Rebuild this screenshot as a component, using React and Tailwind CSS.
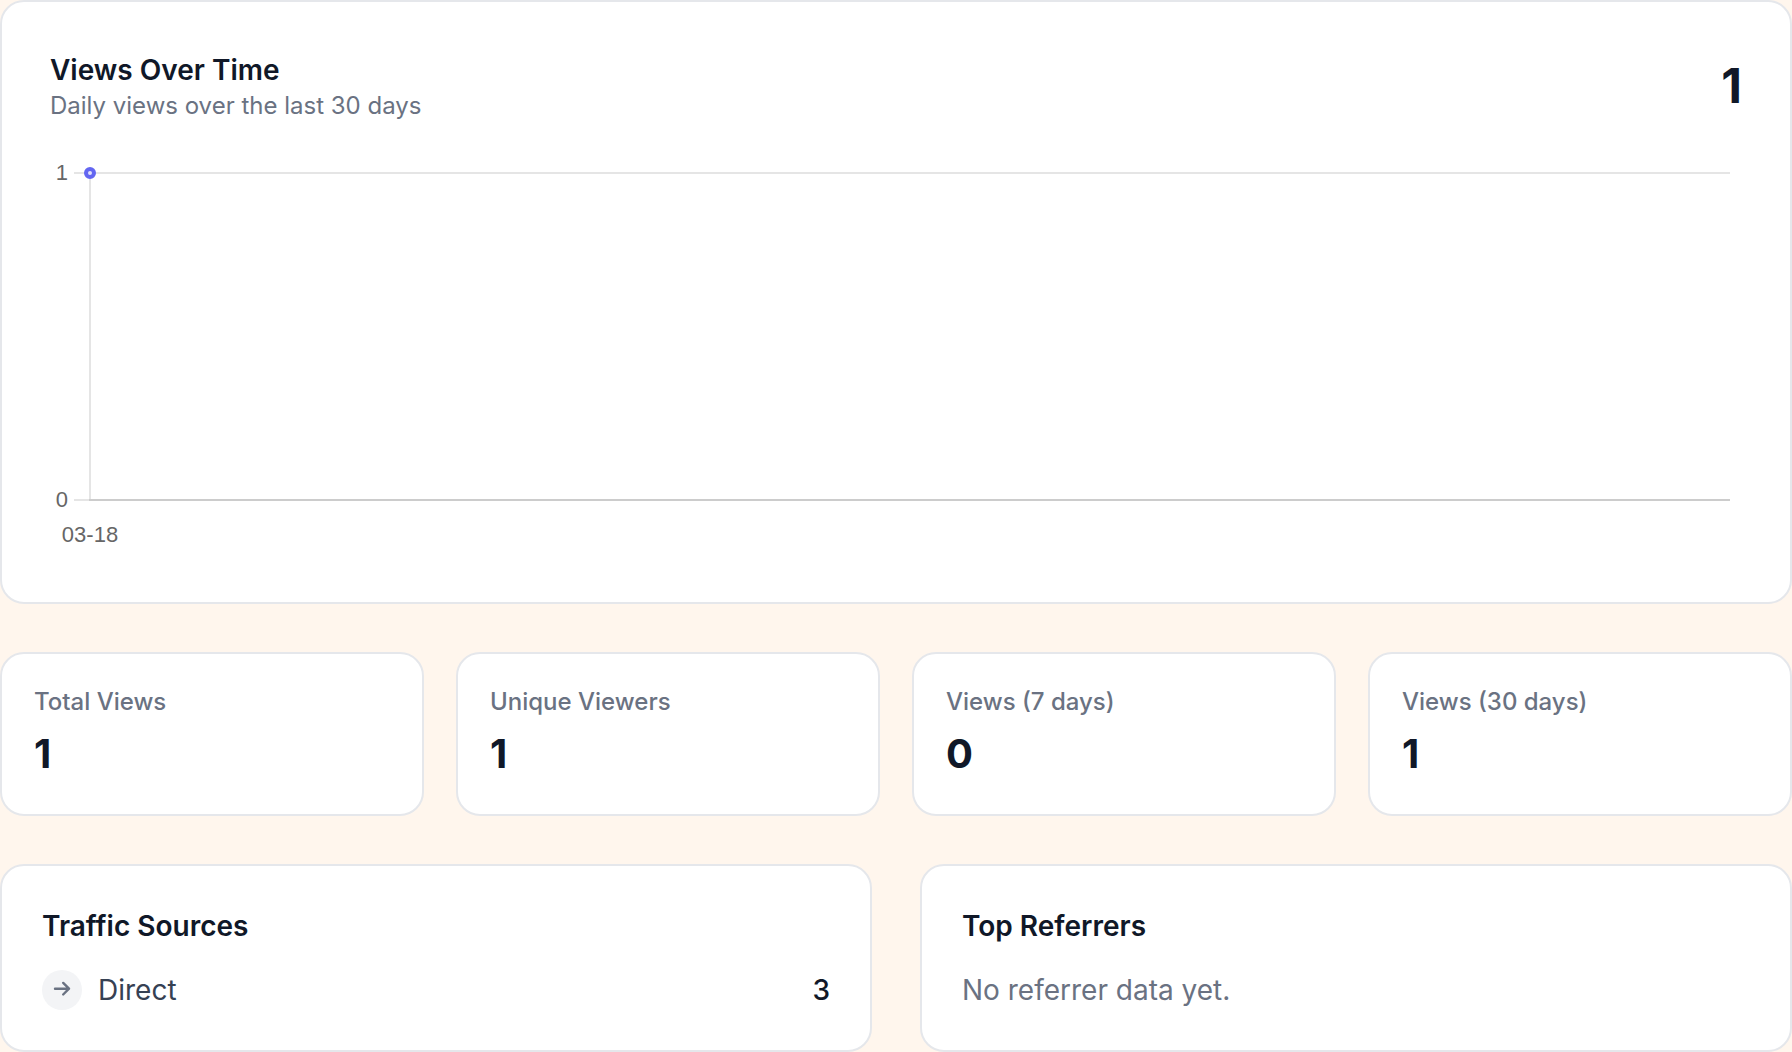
import React from "react";

const stats = [
  { label: "Total Views", value: 1 },
  { label: "Unique Viewers", value: 1 },
  { label: "Views (7 days)", value: 0 },
  { label: "Views (30 days)", value: 1 },
];

const sources = [{ name: "Direct", count: 3 }];

const referrers = [];

function Card({ className, children }) {
  return (
    <div className={`bg-white border-2 border-gray-200 rounded-3xl ${className}`}>
      {children}
    </div>
  );
}

function ArrowIcon() {
  return (
    <svg
      className="w-5 h-5 mb-1 text-gray-500"
      viewBox="0 0 20 20"
      fill="none"
      stroke="currentColor"
      strokeWidth="2.4"
      strokeLinecap="round"
      strokeLinejoin="round"
      aria-hidden="true"
    >
      <path d="M3 10.7h14M11.2 4.9l5.8 5.8-5.8 5.8" />
    </svg>
  );
}

// Single point line chart, the plot area stretches with the card
function ViewsChart() {
  return (
    <div className="h-[400px] pr-3">
      <svg
        className="w-full h-full overflow-visible font-['Liberation_Sans',sans-serif] text-[22px]"
        role="img"
        aria-label="Daily views"
      >
        {/* grid */}
        <line x1="24" y1="19" x2="100%" y2="19" stroke="#e5e5e5" strokeWidth="2" />
        <line x1="24" y1="346" x2="40" y2="346" stroke="#e5e5e5" strokeWidth="2" />
        <line x1="40" y1="19" x2="40" y2="346" stroke="#e5e5e5" strokeWidth="2" />
        <line x1="39" y1="346" x2="100%" y2="346" stroke="#cccccc" strokeWidth="2" />

        {/* axis labels */}
        <g fill="#666666">
          <text x="18" y="26" textAnchor="end">1</text>
          <text x="18" y="353" textAnchor="end">0</text>
          <text x="40" y="388" textAnchor="middle">03-18</text>
        </g>

        {/* point */}
        <circle cx="40" cy="19" r="4" fill="#e0e0fc" stroke="#6366f1" strokeWidth="4" />
      </svg>
    </div>
  );
}

function App() {
  return (
    <main className="min-h-screen bg-[#fff6ed] font-[Inter,sans-serif] flex flex-col gap-12">
      <Card className="p-12">
        <div className="flex items-center justify-between mb-8">
          <div>
            <h2 className="text-[28px] leading-10 font-semibold text-gray-900">
              Views Over Time
            </h2>
            <p className="text-2xl text-gray-500">
              Daily views over the last 30 days
            </p>
          </div>
          <span className="text-5xl font-bold text-gray-900">1</span>
        </div>
        <ViewsChart />
      </Card>

      {/* Summary numbers */}
      <div className="grid grid-cols-4 gap-8">
        {stats.map((s) => (
          <Card key={s.label} className="p-8">
            <p className="text-2xl font-medium text-gray-500">{s.label}</p>
            <p className="mt-2 text-[40px] leading-14 font-bold text-gray-900">
              {s.value}
            </p>
          </Card>
        ))}
      </div>

      <div className="grid grid-cols-2 gap-12">
        <Card className="p-10">
          <h3 className="mb-6 text-[28px] leading-10 font-semibold text-gray-900">
            Traffic Sources
          </h3>
          <ul>
            {sources.map((s) => (
              <li key={s.name} className="flex items-center gap-4 text-[28px] leading-10">
                <span className="w-10 h-10 rounded-full bg-gray-100 flex items-center justify-center">
                  <ArrowIcon />
                </span>
                <span className="text-gray-700">{s.name}</span>
                <span className="ml-auto font-medium text-gray-900">{s.count}</span>
              </li>
            ))}
          </ul>
        </Card>

        <Card className="p-10">
          <h3 className="mb-6 text-[28px] leading-10 font-semibold text-gray-900">
            Top Referrers
          </h3>
          {referrers.length === 0 && (
            <p className="text-[28px] leading-10 text-gray-500">No referrer data yet.</p>
          )}
        </Card>
      </div>
    </main>
  );
}

export default App;
